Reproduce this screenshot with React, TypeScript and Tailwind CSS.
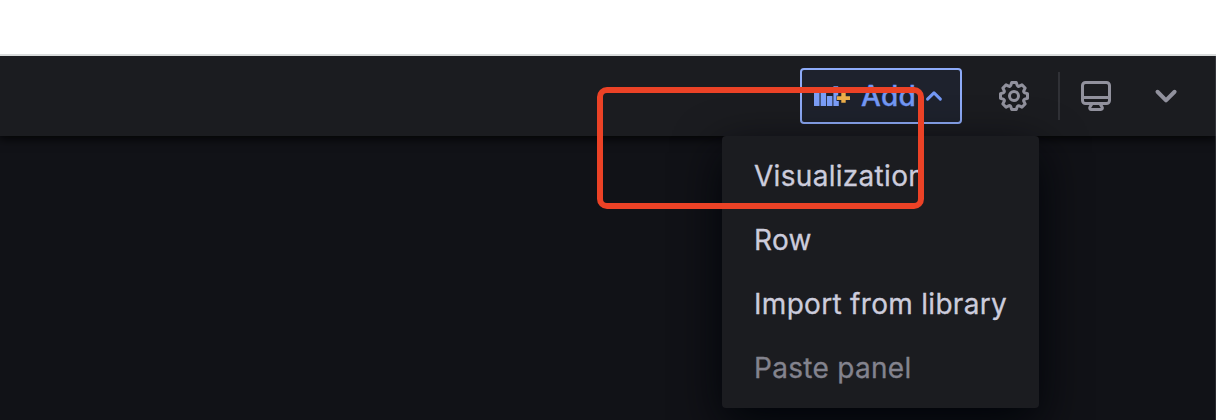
import type { ReactNode } from 'react';

const paths = {
  cog: 'M21.32,9.55l-1.89-.63.89-1.78A1,1,0,0,0,20.13,6L18,3.87a1,1,0,0,0-1.15-.19l-1.78.89-.63-1.89A1,1,0,0,0,13.5,2h-3a1,1,0,0,0-.95.68L8.92,4.57,7.14,3.68A1,1,0,0,0,6,3.87L3.87,6a1,1,0,0,0-.19,1.15l.89,1.78-1.89.63A1,1,0,0,0,2,10.5v3a1,1,0,0,0,.68.95l1.89.63-.89,1.78A1,1,0,0,0,3.87,18L6,20.13a1,1,0,0,0,1.15.19l1.78-.89.63,1.89a1,1,0,0,0,.95.68h3a1,1,0,0,0,.95-.68l.63-1.89,1.78.89A1,1,0,0,0,18,20.13L20.13,18a1,1,0,0,0,.19-1.15l-.89-1.78,1.89-.63A1,1,0,0,0,22,13.5v-3A1,1,0,0,0,21.32,9.55ZM20,12.78l-1.2.4A2,2,0,0,0,17.64,16l.57,1.14-1.1,1.1L16,17.64a2,2,0,0,0-2.79,1.16l-.4,1.2H11.22l-.4-1.2A2,2,0,0,0,8,17.64l-1.14.57-1.1-1.1L6.36,16A2,2,0,0,0,5.2,13.18L4,12.78V11.22l1.2-.4A2,2,0,0,0,6.36,8L5.79,6.89l1.1-1.1L8,6.36A2,2,0,0,0,10.82,5.2l.4-1.2h1.56l.4,1.2A2,2,0,0,0,16,6.36l1.14-.57,1.1,1.1L17.64,8a2,2,0,0,0,1.16,2.79l1.2.4ZM12,8a4,4,0,1,0,4,4A4,4,0,0,0,12,8Zm0,6a2,2,0,1,1,2-2A2,2,0,0,1,12,14Z',
  monitor:
    'M19,2H5A3,3,0,0,0,2,5V15a3,3,0,0,0,3,3H7.64l-.58,1a2,2,0,0,0,0,2,2,2,0,0,0,1.75,1h6.46A2,2,0,0,0,17,21a2,2,0,0,0,0-2l-.59-1H19a3,3,0,0,0,3-3V5A3,3,0,0,0,19,2ZM8.77,20,10,18H14l1.2,2ZM20,15a1,1,0,0,1-1,1H5a1,1,0,0,1-1-1V14H20Zm0-3H4V5A1,1,0,0,1,5,4H19a1,1,0,0,1,1,1Z',
  angleDown:
    'M17,9.17a1,1,0,0,0-1.41,0L12,12.71,8.46,9.17a1,1,0,0,0-1.41,0,1,1,0,0,0,0,1.42l4.24,4.24a1,1,0,0,0,1.42,0L17,10.59A1,1,0,0,0,17,9.17Z',
};

function Icon({ d, className }: { d: string; className: string }) {
  return (
    <svg viewBox="0 0 24 24" fill="currentColor" className={className}>
      <path d={d} />
    </svg>
  );
}

function PanelAddIcon() {
  return (
    <svg viewBox="0 0 36 22" className="h-[22px] w-9 shrink-0">
      <g fill="#7b9ef8">
        <rect x="0" y="3" width="5.5" height="18" rx="0.6" />
        <rect x="6.6" y="5" width="5.5" height="16" rx="0.6" />
        <rect x="12.9" y="11" width="5.5" height="10" rx="0.6" />
        <path d="M19.4 1.2h4.8v9.3h-1.7v5.6h2.3V21h-5.4V1.2Z" />
      </g>
      <path d="M27.3 8h4.4v3.2H36v3.9h-4.3V17.8h-4.4v-2.7H23v-3.9h4.3Z" fill="#ecae4a" />
    </svg>
  );
}

function MenuItem({ children, disabled }: { children: ReactNode; disabled?: boolean }) {
  return (
    <button
      type="button"
      disabled={disabled}
      className={
        disabled
          ? 'flex h-16 w-full items-center px-8 whitespace-nowrap text-[#83838e]'
          : 'flex h-16 w-full items-center px-8 whitespace-nowrap'
      }
    >
      {children}
    </button>
  );
}

export default function App() {
  return (
    <div className="relative flex h-[420px] w-full flex-col overflow-hidden bg-[#111217] font-['Inter',sans-serif] text-[28px] tracking-[0.3px] text-[#ccccdc]">
      <div className="relative z-10 h-14 shrink-0 border-b-2 border-[#d9dcdc] bg-white" />
      <header className="flex h-20 shrink-0 items-center justify-end border-r border-[#34353a] bg-[#1b1c20] pr-[25px] text-[#91919d] shadow-[0_1px_10px_1px_#020203]">
        <div className="relative">
          <button
            type="button"
            className="flex h-14 w-[162px] items-center rounded-[4px] border-2 border-[#8eabf8] bg-[#1e222d] pl-3 font-medium text-[#7398f5]"
          >
            <PanelAddIcon />
            <span className="ml-[11px] [-webkit-text-stroke:0.3px]">Add</span>
            <Icon d={paths.angleDown} className="size-9 shrink-0 rotate-180" />
          </button>
          <div className="absolute top-[68px] -left-[78px] w-[317px] rounded-[4px] bg-[#1b1c20] py-2 text-[#ccccdc] shadow-[0_16px_48px_#010409] [-webkit-text-stroke:0.3px]">
            <MenuItem>Visualization</MenuItem>
            <MenuItem>Row</MenuItem>
            <MenuItem>Import from library</MenuItem>
            <MenuItem disabled>Paste panel</MenuItem>
          </div>
        </div>
        <Icon d={paths.cog} className="ml-[34px] size-9" />
        <div className="ml-[26px] h-12 w-0.5 bg-[#303136]" />
        <Icon d={paths.monitor} className="ml-[18px] size-9" />
        <Icon d={paths.angleDown} className="ml-[28px] size-12" />
      </header>
      <main className="flex-1 border-r border-[#28292e]" />
      <div className="pointer-events-none absolute top-[87px] left-[597px] h-[122px] w-[327px] rounded-[10px] border-6 border-[#ec4226]" />
    </div>
  );
}
